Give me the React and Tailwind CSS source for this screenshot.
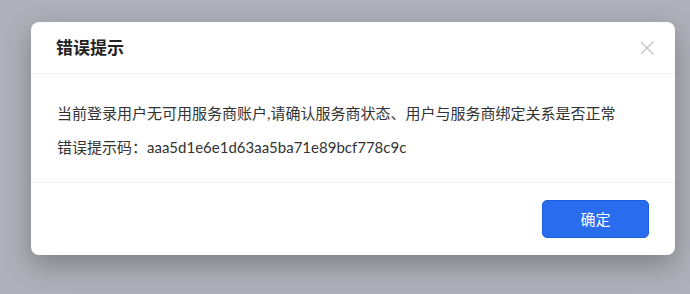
import React from 'react'

const cjk = { fontFamily: 'Lato, "Noto Sans CJK SC", sans-serif' }

const ErrorDialog = () => {
    return (
        <div className="w-[644px] rounded-lg bg-white shadow-[0_10px_28px_rgba(0,0,0,0.28)] text-[#333333]">
            <div className="h-[52px] flex items-center justify-between pl-[25px] pr-[21px] border-b border-[#f0f0f0]">
                <span className="text-[17px] font-bold text-[#222222]">错误提示</span>
                <svg width="14" height="14" viewBox="0 0 14 14" className="text-[#c4c4c4]">
                    <path d="M1 1 L13 13 M13 1 L1 13" stroke="currentColor" strokeWidth="1.3" />
                </svg>
            </div>
            <div className="pt-[27px] pb-[23px] px-[26px] flex flex-col gap-[10px] text-[15px] leading-[24px]">
                <p>当前登录用户无可用服务商账户,请确认服务商状态、用户与服务商绑定关系是否正常</p>
                <p>错误提示码：aaa5d1e6e1d63aa5ba71e89bcf778c9c</p>
            </div>
            <div className="border-t border-[#f0f0f0] flex justify-end pt-[17px] pb-[17px] pr-[26px]">
                <button className="w-[107px] h-[38px] rounded-[5px] bg-[#2a6cee] border border-[#1f60e3] text-white text-[15px]">确定</button>
            </div>
        </div>
    )
}

export default function App() {
    return (
        <div style={cjk} className="w-[690px] h-[294px] bg-[#aeb1b9] pt-[22px] pl-[31px] overflow-hidden">
            <ErrorDialog />
        </div>
    )
}
